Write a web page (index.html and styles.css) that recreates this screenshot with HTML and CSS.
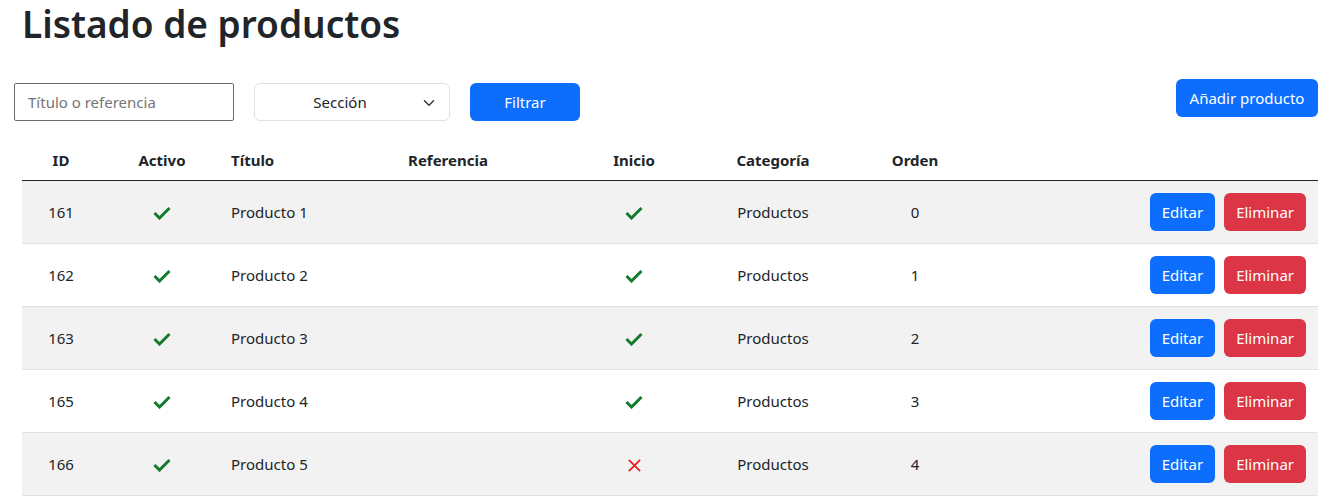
FILE: index.html
```html
<!DOCTYPE html>
<html lang="es">
<head>
<meta charset="utf-8">
<title>Listado de productos</title>
<link rel="stylesheet" href="styles.css">
</head>
<body>
<h1 class="title">Listado de productos</h1>
<div class="toolbar">
  <div class="filters">
    <input class="search" type="text" placeholder="Título o referencia">
    <div class="select"><span>Sección</span>
      <svg class="chev" width="12" height="12" viewBox="0 0 16 16"><path d="M2 5l6 6 6-6" fill="none" stroke="#343a40" stroke-width="2" stroke-linecap="round" stroke-linejoin="round"/></svg>
    </div>
    <button class="btn btn-primary btn-filter">Filtrar</button>
  </div>
  <button class="btn btn-primary btn-add">Añadir producto</button>
</div>
<table class="products">
  <colgroup>
    <col style="width:78px"><col style="width:124px"><col style="width:104px"><col style="width:240px"><col style="width:132px"><col style="width:146px"><col style="width:138px"><col>
  </colgroup>
  <thead>
    <tr><th>ID</th><th>Activo</th><th class="left">Título</th><th>Referencia</th><th>Inicio</th><th>Categoría</th><th>Orden</th><th></th></tr>
  </thead>
  <tbody>
    <tr><td>161</td><td><svg class="ok" viewBox="0 0 18 14"><path d="M1.5 7l5 5L16.5 2" fill="none" stroke="#137a2e" stroke-width="3"/></svg></td><td class="left">Producto 1</td><td></td><td><svg class="ok" viewBox="0 0 18 14"><path d="M1.5 7l5 5L16.5 2" fill="none" stroke="#137a2e" stroke-width="3"/></svg></td><td>Productos</td><td>0</td><td class="actions"><button class="btn btn-primary">Editar</button><button class="btn btn-danger">Eliminar</button></td></tr>
    <tr><td>162</td><td><svg class="ok" viewBox="0 0 18 14"><path d="M1.5 7l5 5L16.5 2" fill="none" stroke="#137a2e" stroke-width="3"/></svg></td><td class="left">Producto 2</td><td></td><td><svg class="ok" viewBox="0 0 18 14"><path d="M1.5 7l5 5L16.5 2" fill="none" stroke="#137a2e" stroke-width="3"/></svg></td><td>Productos</td><td>1</td><td class="actions"><button class="btn btn-primary">Editar</button><button class="btn btn-danger">Eliminar</button></td></tr>
    <tr><td>163</td><td><svg class="ok" viewBox="0 0 18 14"><path d="M1.5 7l5 5L16.5 2" fill="none" stroke="#137a2e" stroke-width="3"/></svg></td><td class="left">Producto 3</td><td></td><td><svg class="ok" viewBox="0 0 18 14"><path d="M1.5 7l5 5L16.5 2" fill="none" stroke="#137a2e" stroke-width="3"/></svg></td><td>Productos</td><td>2</td><td class="actions"><button class="btn btn-primary">Editar</button><button class="btn btn-danger">Eliminar</button></td></tr>
    <tr><td>165</td><td><svg class="ok" viewBox="0 0 18 14"><path d="M1.5 7l5 5L16.5 2" fill="none" stroke="#137a2e" stroke-width="3"/></svg></td><td class="left">Producto 4</td><td></td><td><svg class="ok" viewBox="0 0 18 14"><path d="M1.5 7l5 5L16.5 2" fill="none" stroke="#137a2e" stroke-width="3"/></svg></td><td>Productos</td><td>3</td><td class="actions"><button class="btn btn-primary">Editar</button><button class="btn btn-danger">Eliminar</button></td></tr>
    <tr><td>166</td><td><svg class="ok" viewBox="0 0 18 14"><path d="M1.5 7l5 5L16.5 2" fill="none" stroke="#137a2e" stroke-width="3"/></svg></td><td class="left">Producto 5</td><td></td><td><svg class="no" viewBox="0 0 16 16"><path d="M2 2l12 12M14 2L2 14" fill="none" stroke="#f01818" stroke-width="1.8"/></svg></td><td>Productos</td><td>4</td><td class="actions"><button class="btn btn-primary">Editar</button><button class="btn btn-danger">Eliminar</button></td></tr>
  </tbody>
</table>
</body>
</html>
```

FILE: styles.css
```css
* { box-sizing: border-box; }
body {
  margin: 0;
  font-family: "Noto Sans", "Open Sans", sans-serif;
  font-size: 15px;
  color: #212529;
  background: #fff;
}
.title {
  margin: 0;
  padding-left: 22px;
  font-size: 37px;
  font-weight: 600;
  line-height: 48px;
  color: #212529;
}
.toolbar {
  display: flex;
  justify-content: space-between;
  align-items: flex-start;
  margin-top: 31px;
  padding: 0 21px 0 14px;
}
.filters {
  display: flex;
  gap: 20px;
  margin-top: 4px;
}
.search {
  width: 220px;
  height: 38px;
  border: 1px solid #6c6c6c;
  border-radius: 2px;
  padding: 0 13px;
  font-family: inherit;
  font-size: 15px;
  color: #212529;
}
.search::placeholder { color: #757575; }
.select {
  position: relative;
  width: 196px;
  height: 38px;
  border: 1px solid #dee2e6;
  border-radius: 6px;
  display: flex;
  align-items: center;
  justify-content: center;
  padding-right: 24px;
  font-size: 15px;
}
.chev { position: absolute; right: 14px; top: 13px; }
.btn {
  height: 38px;
  border: none;
  border-radius: 6px;
  padding: 0 12px;
  font-family: inherit;
  font-size: 15px;
  color: #fff;
  cursor: pointer;
}
.btn-primary { background: #0d6efd; }
.btn-danger { background: #dc3545; }
.btn-filter { width: 110px; }
.btn-add { width: 142px; padding: 0; }
.products {
  margin: 19px 0 0 22px;
  width: 1296px;
  border-collapse: collapse;
  table-layout: fixed;
}
.products th, .products td {
  text-align: center;
  padding: 0 12px;
  vertical-align: middle;
}
.products th {
  height: 40px;
  font-weight: 700;
  border-bottom: 1px solid #212529;
}
.products td {
  height: 63px;
  border-bottom: 1px solid #dee2e6;
}
.products tbody tr:nth-child(odd) td { background: #f2f2f2; }
.products .left { text-align: left; padding-left: 7px; }
.products td.actions {
  text-align: right;
  padding-right: 12px;
}
.actions .btn { margin-left: 9px; }
.ok { width: 18px; height: 14px; display: inline-block; vertical-align: middle; }
.no { width: 15px; height: 15px; display: inline-block; vertical-align: middle; }
```
